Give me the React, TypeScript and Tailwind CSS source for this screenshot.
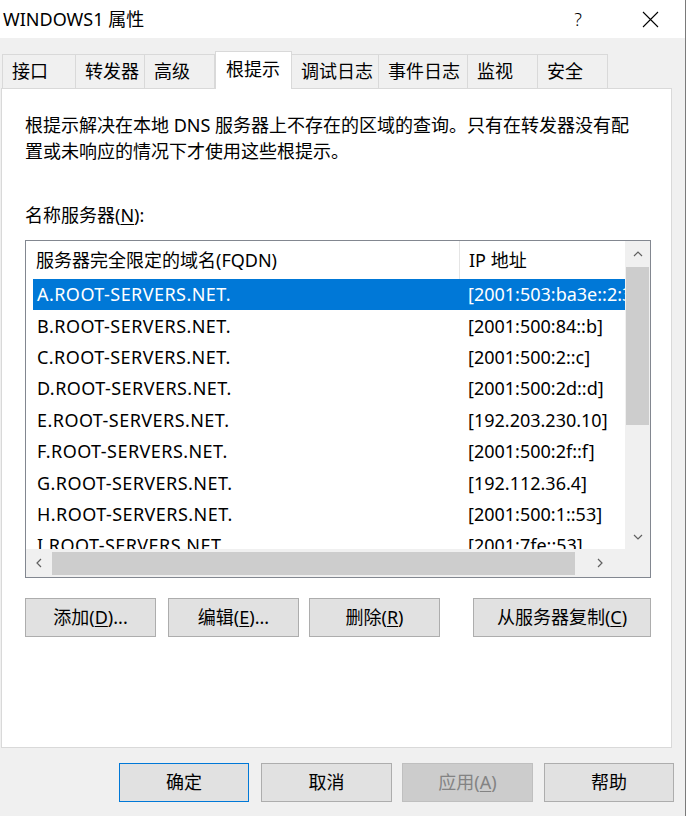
import { ReactNode } from 'react'

const FONT = "font-['Segoe_UI','Noto_Sans','Noto_Sans_CJK_SC',sans-serif]"

const tabs = [
    { label: '接口', w: 'w-[74px]' },
    { label: '转发器', w: 'w-[70px]' },
    { label: '高级', w: 'w-[71px]' },
    { label: '根提示', w: 'w-[77px]', active: true },
    { label: '调试日志', w: 'w-[88px]' },
    { label: '事件日志', w: 'w-[90px]' },
    { label: '监视', w: 'w-[71px]' },
    { label: '安全', w: 'w-[71px]' },
]

const servers = [
    ['A.ROOT-SERVERS.NET.', '[2001:503:ba3e::2:30]'],
    ['B.ROOT-SERVERS.NET.', '[2001:500:84::b]'],
    ['C.ROOT-SERVERS.NET.', '[2001:500:2::c]'],
    ['D.ROOT-SERVERS.NET.', '[2001:500:2d::d]'],
    ['E.ROOT-SERVERS.NET.', '[192.203.230.10]'],
    ['F.ROOT-SERVERS.NET.', '[2001:500:2f::f]'],
    ['G.ROOT-SERVERS.NET.', '[192.112.36.4]'],
    ['H.ROOT-SERVERS.NET.', '[2001:500:1::53]'],
    ['I.ROOT-SERVERS.NET.', '[2001:7fe::53]'],
]

function Chevron({ dir }: { dir: 'up' | 'down' | 'left' | 'right' }) {
    const pts = {
        up: '1,6 5,2 9,6',
        down: '1,2 5,6 9,2',
        left: '6,1 2,5 6,9',
        right: '2,1 6,5 2,9',
    }[dir]
    const vertical = dir === 'up' || dir === 'down'
    return (
        <svg width={vertical ? 10 : 8} height={vertical ? 8 : 10} viewBox={vertical ? '0 0 10 8' : '0 0 8 10'}>
            <polyline points={pts} fill="none" stroke="#606060" strokeWidth="1.2" />
        </svg>
    )
}

function Btn({ children, className = '', primary, disabled }: { children: ReactNode; className?: string; primary?: boolean; disabled?: boolean }) {
    return (
        <div
            className={`h-[39px] flex items-center justify-center border text-[18px] ${
                disabled
                    ? 'bg-[#cccccc] border-[#bfbfbf] text-[#838383]'
                    : primary
                      ? 'bg-[#e1e1e1] border-[#0078d7] text-black'
                      : 'bg-[#e1e1e1] border-[#adadad] text-black'
            } ${className}`}
        >
            {children}
        </div>
    )
}

export default function App() {
    return (
        <div className={`w-[688px] h-[816px] bg-white overflow-hidden ${FONT}`}>
            <div className="w-[686px] h-full border-r border-[#7a7a7a] flex flex-col">
                {/* title bar */}
                <div className="h-[38px] bg-white flex items-center pl-[3px] shrink-0">
                    <span className="text-[18px] text-black">WINDOWS1 属性</span>
                    <span className="ml-auto mr-[60px] text-[18px] font-light text-black">?</span>
                    <svg width="17" height="17" viewBox="0 0 17 17" className="mr-[26px]">
                        <path d="M1 1 L16 16 M16 1 L1 16" stroke="#000" strokeWidth="1.1" />
                    </svg>
                </div>

                <div className="flex-1 bg-[#f0f0f0] flex flex-col">
                    {/* tabs */}
                    <div className="flex items-end pl-[2px] mt-[13px] h-[38px] relative z-10">
                        {tabs.map((t) =>
                            t.active ? (
                                <div
                                    key={t.label}
                                    className={`${t.w} h-[38px] bg-white border border-b-0 border-[#d9d9d9] pl-[10px] pt-[4px] text-[18px] text-black`}
                                >
                                    {t.label}
                                </div>
                            ) : (
                                <div
                                    key={t.label}
                                    className={`${t.w} h-[34px] mb-[1px] bg-[#f0f0f0] border border-b-0 border-[#d9d9d9] -ml-px first:ml-0 pl-[9px] pt-[3px] text-[18px] text-black`}
                                >
                                    {t.label}
                                </div>
                            )
                        )}
                    </div>

                    {/* panel */}
                    <div className="ml-[1px] w-[671px] h-[660px] -mt-px bg-white border border-[#d9d9d9] pl-[23px] pt-[23px]">
                        <p className="text-[18px] leading-[26px] text-black w-[620px]">
                            根提示解决在本地 DNS 服务器上不存在的区域的查询。只有在转发器没有配置或未响应的情况下才使用这些根提示。
                        </p>
                        <div className="mt-[38px] text-[18px] leading-[26px] text-black">
                            名称服务器(<span className="underline underline-offset-2">N</span>):
                        </div>

                        {/* list box */}
                        <div className="mt-[12px] w-[626px] h-[338px] border border-[#828790] bg-white flex flex-col">
                            <div className="flex flex-1 min-h-0">
                                <div className="flex-1 min-w-0 overflow-hidden">
                                    <div className="flex h-[38px] items-center text-[18px] text-black">
                                        <div className="w-[434px] shrink-0 h-full flex items-center pl-[10px] border-r border-[#e5e5e5]">
                                            服务器完全限定的域名(FQDN)
                                        </div>
                                        <div className="pl-[9px] whitespace-nowrap shrink-0">IP 地址</div>
                                    </div>
                                    {servers.map(([name, ip], i) => (
                                        <div
                                            key={name}
                                            className={`flex h-[31.4px] w-[700px] items-center text-[18px] whitespace-nowrap ml-[7px] ${
                                                i === 0 ? 'bg-[#0078d7] text-white' : 'text-black'
                                            }`}
                                        >
                                            <div className="w-[427px] shrink-0 pl-[4px] tracking-[0.45px]">{name}</div>
                                            <div className="pl-[8px] shrink-0">{ip}</div>
                                        </div>
                                    ))}
                                </div>
                                {/* vertical scrollbar */}
                                <div className="w-[25px] shrink-0 bg-[#f0f0f0] flex flex-col items-center">
                                    <div className="h-[26px] flex items-center justify-center">
                                        <Chevron dir="up" />
                                    </div>
                                    <div className="w-[23px] h-[158px] bg-[#cdcdcd]" />
                                    <div className="flex-1" />
                                    <div className="h-[24px] flex items-center justify-center">
                                        <Chevron dir="down" />
                                    </div>
                                </div>
                            </div>
                            {/* horizontal scrollbar */}
                            <div className="h-[28px] flex shrink-0">
                                <div className="flex-1 bg-[#f0f0f0] flex items-center">
                                    <div className="w-[26px] flex items-center justify-center">
                                        <Chevron dir="left" />
                                    </div>
                                    <div className="w-[523px] h-[23px] bg-[#cdcdcd]" />
                                    <div className="flex-1 flex items-center justify-center">
                                        <Chevron dir="right" />
                                    </div>
                                </div>
                                <div className="w-[25px] bg-[#f0f0f0]" />
                            </div>
                        </div>

                        {/* list buttons */}
                        <div className="flex mt-[20px]">
                            <Btn className="w-[131px]">
                                添加(<span className="underline underline-offset-2">D</span>)...
                            </Btn>
                            <Btn className="w-[131px] ml-[12px]">
                                编辑(<span className="underline underline-offset-2">E</span>)...
                            </Btn>
                            <Btn className="w-[131px] ml-[10px]">
                                删除(<span className="underline underline-offset-2">R</span>)
                            </Btn>
                            <Btn className="w-[178px] ml-[33px]">
                                从服务器复制(<span className="underline underline-offset-2">C</span>)
                            </Btn>
                        </div>
                    </div>

                    {/* dialog buttons */}
                    <div className="flex mt-[15px] pl-[119px]">
                        <Btn primary className="w-[130px]">
                            确定
                        </Btn>
                        <Btn className="w-[131px] ml-[12px]">取消</Btn>
                        <Btn disabled className="w-[131px] ml-[10px]">
                            应用(<span className="underline underline-offset-2">A</span>)
                        </Btn>
                        <Btn className="w-[130px] ml-[11px]">帮助</Btn>
                    </div>
                </div>
            </div>
        </div>
    )
}
